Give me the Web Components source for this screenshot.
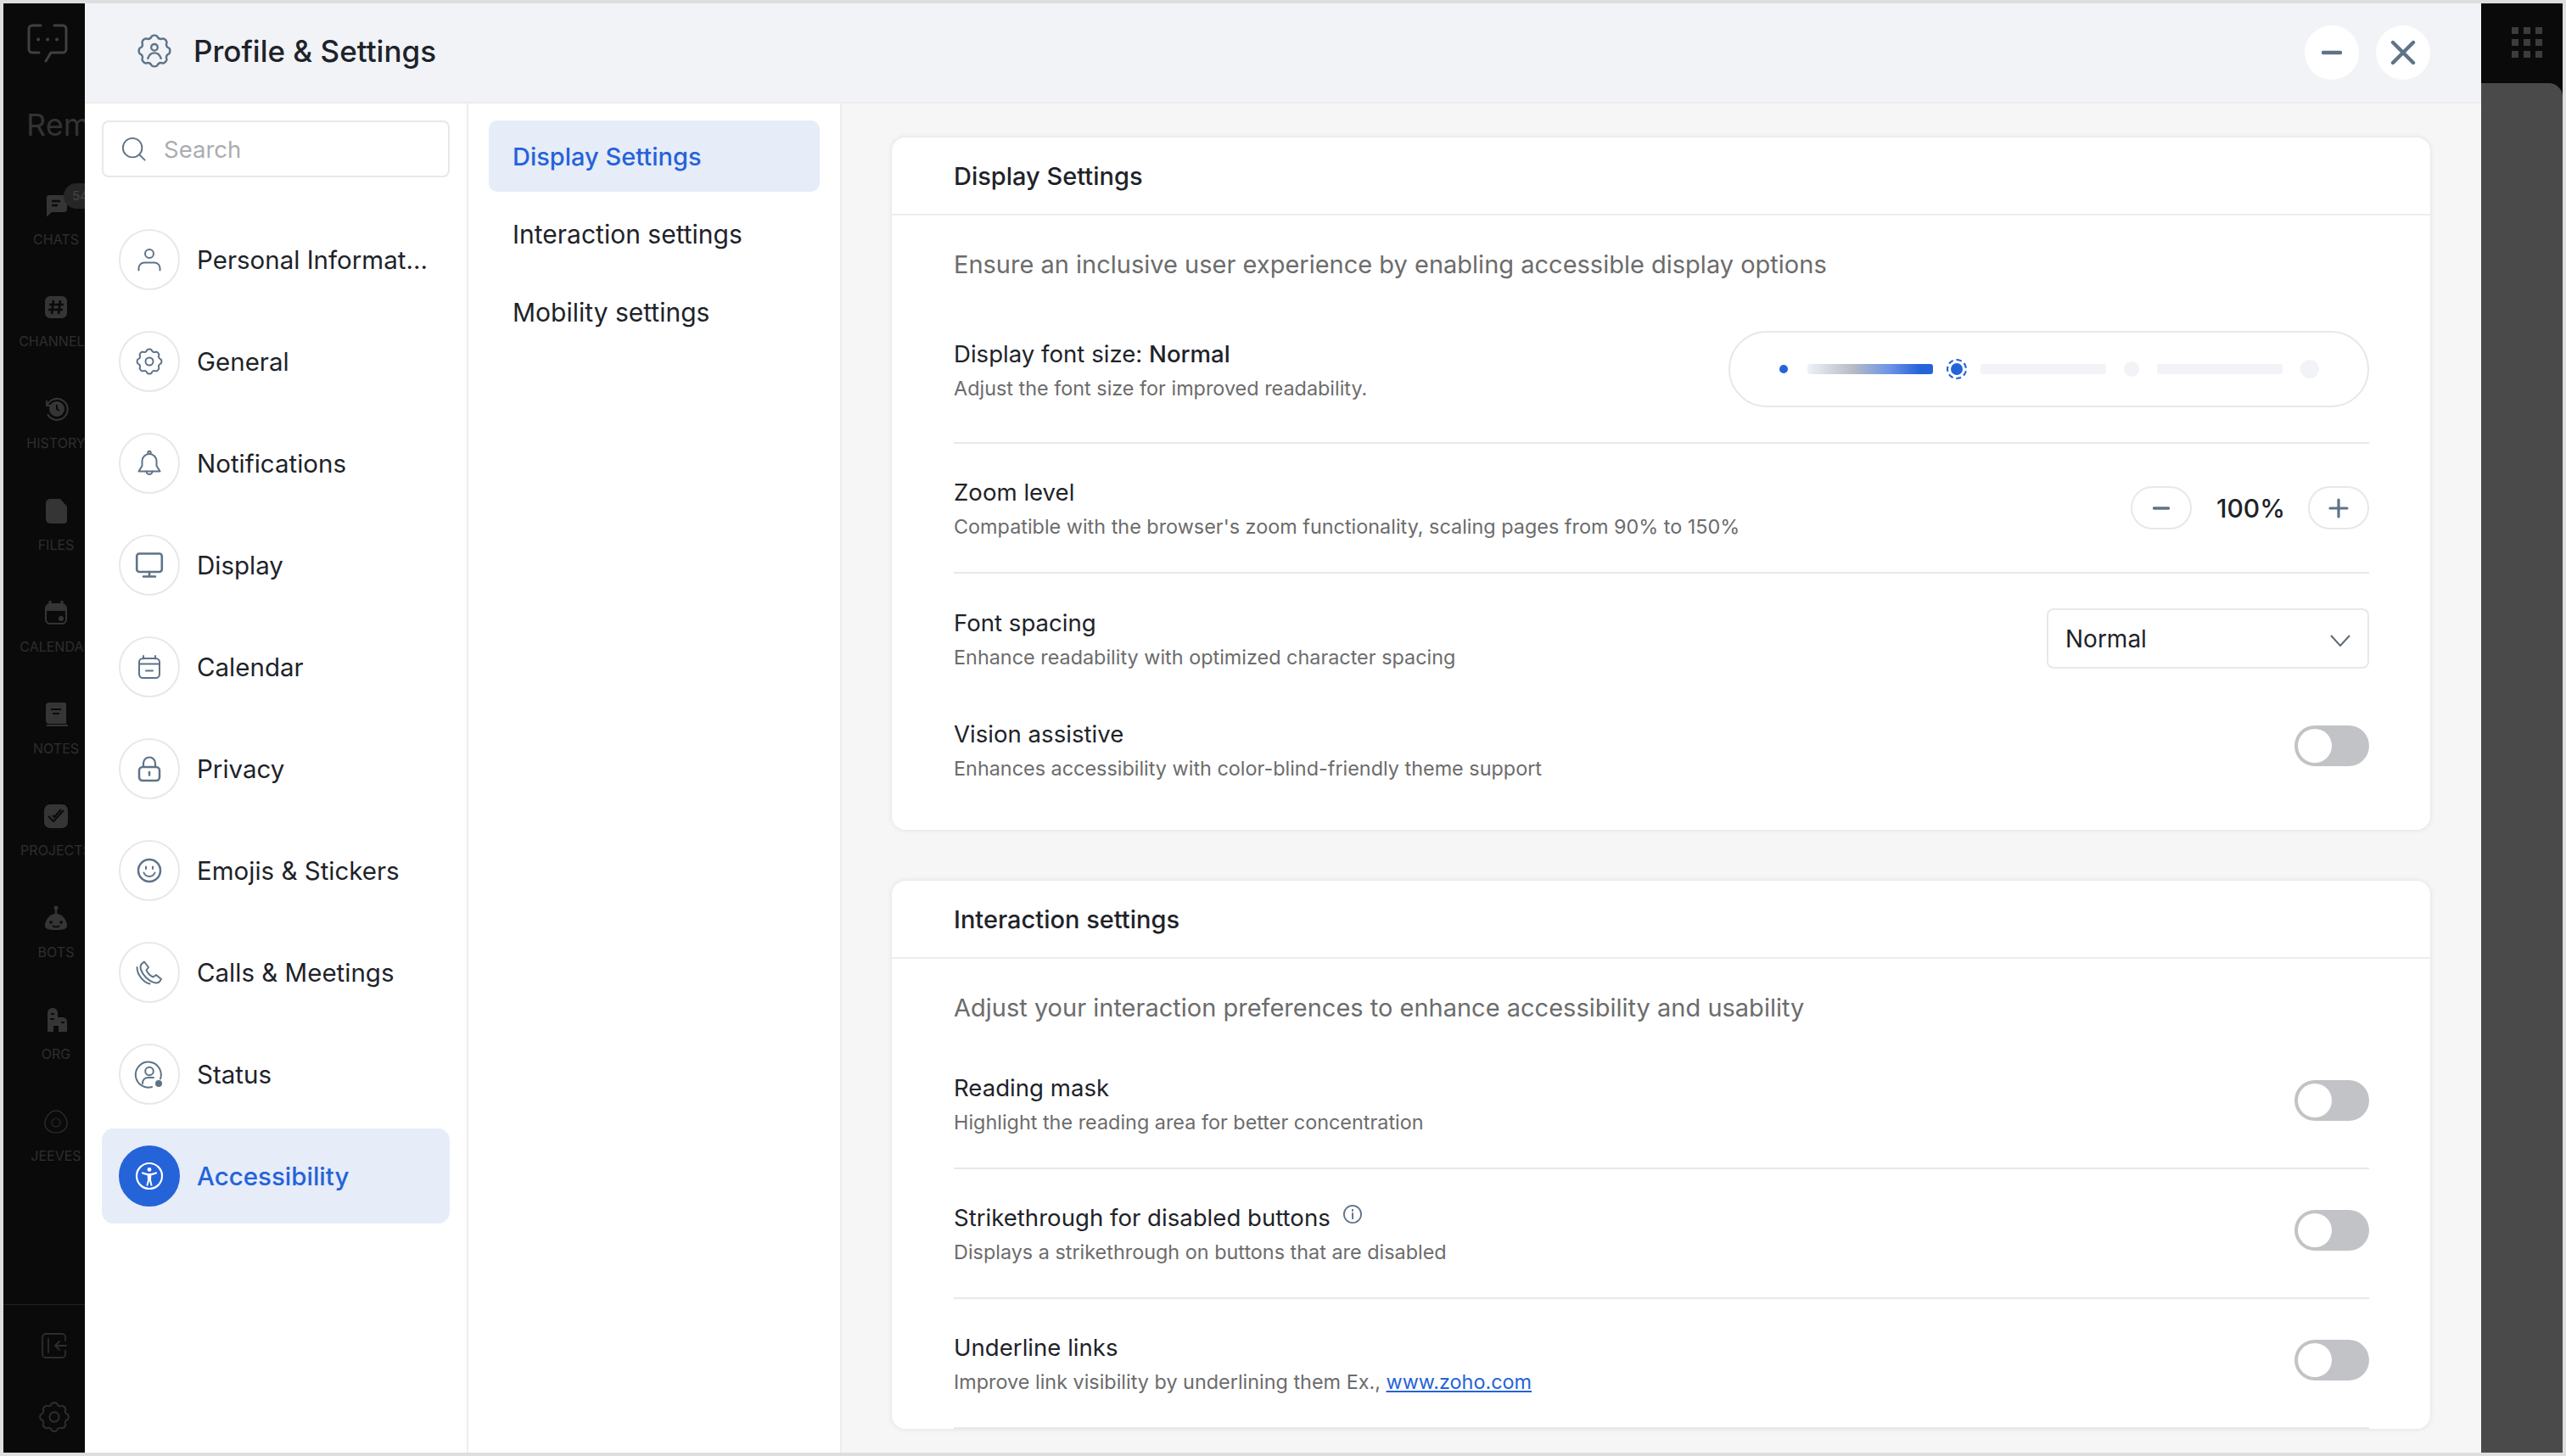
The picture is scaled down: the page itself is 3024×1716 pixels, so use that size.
<!DOCTYPE html>
<html>
<head>
<meta charset="utf-8">
<title>Profile &amp; Settings</title>
<style>
    html, body { margin: 0; height: 100%; overflow: hidden; background: #dedede; }
    body { font-family: Inter, "Liberation Sans", sans-serif; color: #1e2329; }
</style>
</head>
<body>
<app-shell>
    <side-rail slot="rail"></side-rail>
    <settings-modal slot="modal">
        <modal-header slot="header"></modal-header>
        <search-box slot="nav"></search-box>
        <nav-item slot="nav" icon="person">Personal Informat...</nav-item>
        <nav-item slot="nav" icon="gear">General</nav-item>
        <nav-item slot="nav" icon="bell">Notifications</nav-item>
        <nav-item slot="nav" icon="monitor">Display</nav-item>
        <nav-item slot="nav" icon="calendar">Calendar</nav-item>
        <nav-item slot="nav" icon="lock">Privacy</nav-item>
        <nav-item slot="nav" icon="smile">Emojis &amp; Stickers</nav-item>
        <nav-item slot="nav" icon="phone">Calls &amp; Meetings</nav-item>
        <nav-item slot="nav" icon="status">Status</nav-item>
        <nav-item slot="nav" icon="access" active>Accessibility</nav-item>

        <sub-item slot="sub" active>Display Settings</sub-item>
        <sub-item slot="sub">Interaction settings</sub-item>
        <sub-item slot="sub">Mobility settings</sub-item>

        <settings-card slot="content" heading="Display Settings" description="Ensure an inclusive user experience by enabling accessible display options" style="height:816px">
            <setting-row style="--row-h:174px">
                <span slot="title">Display font size: <b style="font-weight:500">Normal</b></span>
                <span slot="sub">Adjust the font size for improved readability.</span>
                <font-slider slot="control"></font-slider>
            </setting-row>
            <setting-row>
                <span slot="title">Zoom level</span>
                <span slot="sub">Compatible with the browser's zoom functionality, scaling pages from 90% to 150%</span>
                <zoom-stepper slot="control"></zoom-stepper>
            </setting-row>
            <setting-row plain>
                <span slot="title">Font spacing</span>
                <span slot="sub">Enhance readability with optimized character spacing</span>
                <select-box slot="control">Normal</select-box>
            </setting-row>
            <setting-row plain style="--row-h:108px">
                <span slot="title">Vision assistive</span>
                <span slot="sub">Enhances accessibility with color-blind-friendly theme support</span>
                <toggle-switch slot="control"></toggle-switch>
            </setting-row>
        </settings-card>

        <settings-card slot="content" heading="Interaction settings" description="Adjust your interaction preferences to enhance accessibility and usability">
            <setting-row>
                <span slot="title">Reading mask</span>
                <span slot="sub">Highlight the reading area for better concentration</span>
                <toggle-switch slot="control"></toggle-switch>
            </setting-row>
            <setting-row>
                <span slot="title">Strikethrough for disabled buttons <app-icon name="info" size="24" style="margin-left:6px;vertical-align:2px"></app-icon></span>
                <span slot="sub">Displays a strikethrough on buttons that are disabled</span>
                <toggle-switch slot="control"></toggle-switch>
            </setting-row>
            <setting-row>
                <span slot="title">Underline links</span>
                <span slot="sub">Improve link visibility by underlining them Ex., <a href="#" style="color:#2563d9">www.zoho.com</a></span>
                <toggle-switch slot="control"></toggle-switch>
            </setting-row>
        </settings-card>
    </settings-modal>
    <apps-strip slot="strip"></apps-strip>
</app-shell>

<script>
// scalloped cog used by the general, header and rail icons
function gearPath(cx, cy, inner, outer, teeth) {
    const step = Math.PI * 2 / teeth;
    const pt = (r, a) => `${(cx + r * Math.cos(a)).toFixed(2)} ${(cy + r * Math.sin(a)).toFixed(2)}`;
    let d = `M${pt(outer, -step * 0.22)}`;
    for (let i = 0; i < teeth; i++) {
        const a = i * step;
        d += ` Q${pt(outer + 1.2, a)} ${pt(outer, a + step * 0.22)}`;
        d += ` Q${pt(inner - 0.6, a + step * 0.5)} ${pt(outer, a + step * 0.78)}`;
    }
    return d + 'Z';
}

const ICONS = {
    person: '<circle cx="16" cy="9" r="5"/><path d="M3.5 28.5V26a6.5 6.5 0 0 1 6.5-6.5h12a6.5 6.5 0 0 1 6.5 6.5v2.5"/>',
    gear: `<path d="${gearPath(16, 16, 11, 14, 8)}"/><circle cx="16" cy="16" r="4.5"/>`,
    bell: '<circle cx="16" cy="3.4" r="1.7"/><path d="M16 5a8.5 8.5 0 0 0-8.5 8.5V19l-4 6.5h25l-4-6.5v-5.5A8.5 8.5 0 0 0 16 5z"/><path d="M12.5 25.5a3.5 3.5 0 0 0 7 0"/>',
    monitor: '<rect x="1.2" y="2.5" width="29.6" height="21.5" rx="3" stroke-width="2.6"/><path d="M16 24v5M9 29.5h14" stroke-width="2.6"/>',
    calendar: '<rect x="4" y="6" width="24" height="23" rx="4.5"/><path d="M4 12.5h24M9 3v3.5M23 3v3.5M12 20.5h8"/>',
    lock: '<rect x="4" y="14" width="24" height="16" rx="4" stroke-width="2.5"/><path d="M9 14V9.5a7 7 0 0 1 14 0V14" stroke-width="2.2"/><path d="M16 20v3.5" stroke-width="2.5"/>',
    smile: '<circle cx="16" cy="16" r="13" stroke-width="2.5"/><path d="M12 11.5v2.5M20 11.5v2.5M9.5 18.5a7 7 0 0 0 13 0"/>',
    phone: '<path d="M10 3.5 7 6c-3 3-1 10 5 16s13 8 16 5l2-3-6-5-3.5 2.5c-3-1-7-5-8-8l2.5-3.5z"/><path d="M1.5 10c0 9 8 18 15 19.5"/>',
    status: '<path d="M29 21.5A15 15 0 1 0 19 31"/><circle cx="16" cy="12.5" r="4.8"/><path d="M8 27c0-4.5 3-7 6.5-7H21"/><circle cx="27" cy="27" r="4" fill="currentColor" stroke="none"/>',
    access: '<circle cx="16" cy="16" r="15" stroke-width="2.2"/><circle cx="16" cy="8.5" r="2.4" fill="currentColor" stroke="none"/><path d="M8 12.5l5.5 1.6h5l5.5-1.6" stroke-width="2.2"/><path d="M13.6 14h4.8l-.4 6.5 1.6 7h-2L16 21.5l-1.6 6h-2l1.6-7z" fill="currentColor" stroke="none"/>',
    search: '<circle cx="14" cy="14" r="12"/><path d="M23 23l6.5 6.5"/>',
    info: '<circle cx="16" cy="16" r="13.5" stroke-width="2.4"/><path d="M16 14.5v8.5M16 9v1.6" stroke-width="2.6"/>',
    profile: `<path d="${gearPath(16, 16, 12, 15, 8)}"/><circle cx="16" cy="12.5" r="3.2"/><path d="M9.5 23.5c1.2-4 4-5.5 6.5-5.5s5.3 1.500 6.500 5.500"/>`
};

customElements.define('app-icon', class extends HTMLElement {
    connectedCallback() {
        const size = this.getAttribute('size') || 32;
        const root = this.shadowRoot || this.attachShadow({mode: 'open'});
        root.innerHTML = `<style>
            :host { display: inline-flex; color: var(--icon-color, #5f7388); }
            svg { display: block; overflow: visible; }
        </style>
        <svg width="${size}" height="${size}" viewBox="0 0 32 32" fill="none" stroke="currentColor" stroke-width="2" stroke-linecap="round" stroke-linejoin="round">${ICONS[this.getAttribute('name')]}</svg>`;
    }
});

customElements.define('app-shell', class extends HTMLElement {
    constructor() {
        super();
        const shadowRoot = this.attachShadow({mode: 'open'});
        shadowRoot.innerHTML = `<style>
            :host { display: flex; height: 1708px; margin: 4px; }
        </style>
        <slot name="rail"></slot><slot name="modal"></slot><slot name="strip"></slot>`;
    }
});

const RAIL_ITEMS = [
    ['CHATS', '<path d="M7 4h18a4 4 0 0 1 4 4v12a4 4 0 0 1-4 4H11l-6 5.500V8a3 3 0 0 1 2-4z"/><path d="M11 11h10M11 16h7" stroke="#0a0a0a" stroke-width="2.4" fill="none"/>'],
    ['CHANNELS', '<rect x="3" y="3" width="26" height="26" rx="6"/><path d="M13 8l-2 16M21 8l-2 16M8 13h17M7 19h17" stroke="#0a0a0a" stroke-width="2.600" fill="none"/>'],
    ['HISTORY', '<path d="M5 6v6h6M5.500 12A12.500 12.500 0 1 1 6 22" fill="none" stroke="#353535" stroke-width="2"/><circle cx="17" cy="16" r="9"/><path d="M17 11v5l3 2" stroke="#0a0a0a" stroke-width="2" fill="none"/>'],
    ['FILES', '<path d="M9 2h12l8 9v16a4 4 0 0 1-4 4H9a5 5 0 0 1-5-5V7a5 5 0 0 1 5-5z"/>'],
    ['CALENDAR', '<path d="M9 2v4M23 2v4" stroke="#353535" stroke-width="3"/><rect x="3" y="5" width="26" height="25" rx="6"/><path d="M5 14v10a4 4 0 0 0 4 4h14a4 4 0 0 0 4-4V14z" fill="#0a0a0a"/><circle cx="22" cy="23" r="3"/>'],
    ['NOTES', '<path d="M8 2h18a2 2 0 0 1 2 2v23H8a4 4 0 0 1-4-4V6a4 4 0 0 1 4-4z"/><path d="M10 10h12M12 15h8" stroke="#0a0a0a" stroke-width="2" fill="none"/><path d="M5 29h25" stroke="#353535" stroke-width="2"/>'],
    ['PROJECTS', '<rect x="2" y="2" width="28" height="28" rx="7"/><path d="M7 16l6 6 12-13M12 15l2 2 8-9" stroke="#0a0a0a" stroke-width="2" fill="none"/>'],
    ['BOTS', '<path d="M16 2v10" stroke="#353535" stroke-width="2.500"/><circle cx="16" cy="4" r="2.500"/><path d="M16 11c8 0 13 8 13 14 0 4-4 5-13 5S3 29 3 25c0-6 5-14 13-14z"/><path d="M10 21h.1M22 21h.1" stroke="#0a0a0a" stroke-width="3.500" stroke-linecap="round"/><path d="M12 25c2 2 6 2 8 0" stroke="#0a0a0a" stroke-width="2" fill="none"/>'],
    ['ORG', '<path d="M6 30V8c0-4 3-6 6-6s6 2 6 6v5h6a5 5 0 0 1 5 5v12H19v-7h-6v7z"/><path d="M10 9h4M9 15h5M22 19h4" stroke="#0a0a0a" stroke-width="2" fill="none"/>'],
    ['JEEVES', '<path d="M16 3c7 0 13 8 13 15s-6 11-13 11S3 25 3 18 9 3 16 3z" fill="none" stroke="#2a2a2a" stroke-width="1.500"/><circle cx="16" cy="17" r="5" fill="none" stroke="#2a2a2a" stroke-width="1.200"/>']
];

customElements.define('side-rail', class extends HTMLElement {
    constructor() {
        super();
        const items = RAIL_ITEMS.map(([label, icon]) => `
            <div class="item${label === 'CHATS' ? ' chats' : ''}">
                <svg width="32" height="32" viewBox="0 0 32 32" fill="#353535">${icon}</svg>
                <span>${label}</span>
                ${label === 'CHATS' ? '<em>54</em>' : ''}
            </div>`).join('');
        const shadowRoot = this.attachShadow({mode: 'open'});
        shadowRoot.innerHTML = `<style>
            :host { display: flex; flex-direction: column; width: 96px; height: 100%; background: #0a0a0a; overflow: hidden; flex: none; box-sizing: border-box; padding-top: 24px; }
            .logo { display: block; margin-left: 28px; flex: none; }
            .name { margin: 53px 0 0 27px; font-size: 36px; line-height: 40px; color: #333; white-space: nowrap; flex: none; }
            .items { margin-top: 59px; flex: none; }
            .item { position: relative; display: flex; flex-direction: column; align-items: center; width: 124px; height: 120px; gap: 14px; }
            .item span { font-size: 16px; line-height: 20px; color: #2e2e2e; }
            em { position: absolute; left: 71px; top: -10px; width: 60px; height: 30px; border-radius: 15px; background: #262626; color: #454545; font: normal 15px/30px Inter, sans-serif; padding-left: 10px; box-sizing: border-box; }
            .bottom { margin-top: auto; border-top: 1px solid #222; height: 175px; box-sizing: border-box; flex: none; width: 120px; display: flex; flex-direction: column; align-items: center; padding-top: 32px; gap: 50px; color: #2d2d2d; }
        </style>
        <svg class="logo" width="48" height="46" viewBox="0 0 48 46" fill="none" stroke="#404040" stroke-width="3" stroke-linecap="round" stroke-linejoin="round">
            <path d="M16 2H6a4 4 0 0 0-4 4v24a4 4 0 0 0 4 4h8M32 2h10a4 4 0 0 1 4 4v24a4 4 0 0 1-4 4H28l-6 10"/>
            <path d="M13 18.500h.1M24 18.500h.1M35 18.500h.1" stroke-width="4"/>
        </svg>
        <div class="name">Rem</div>
        <div class="items">${items}</div>
        <div class="bottom">
            <svg width="32" height="32" viewBox="0 0 32 32" fill="none" stroke="currentColor" stroke-width="1.800" stroke-linecap="round" stroke-linejoin="round"><path d="M29 10V6a4 4 0 0 0-4-4H6a4 4 0 0 0-4 4v20a4 4 0 0 0 4 4h19a4 4 0 0 0 4-4v-4M9 8v16M30 16H17M22 11l-5 5 5 5"/></svg>
            <svg width="36" height="36" viewBox="0 0 32 32" fill="none" stroke="currentColor" stroke-width="1.800" stroke-linejoin="round"><path d="${gearPath(16, 16, 11.500, 14.500, 8)}"/><circle cx="16" cy="16" r="5"/></svg>
        </div>`;
    }
});

customElements.define('apps-strip', class extends HTMLElement {
    constructor() {
        super();
        const shadowRoot = this.attachShadow({mode: 'open'});
        shadowRoot.innerHTML = `<style>
            :host { display: flex; flex-direction: column; width: 96px; flex: none; background: #0a0a0a; }
            .grid { display: grid; grid-template-columns: repeat(3, 8px); grid-auto-rows: 8px; gap: 6px; padding: 28px 0 0 36px; height: 94px; box-sizing: border-box; align-content: start; }
            .grid i { background: #3c3c3c; }
            .panel { flex: 1; background: #4a4a4a; border-top-right-radius: 16px; }
        </style>
        <div class="grid">${'<i></i>'.repeat(9)}</div>
        <div class="panel"></div>`;
    }
});

customElements.define('settings-modal', class extends HTMLElement {
    constructor() {
        super();
        const shadowRoot = this.attachShadow({mode: 'open'});
        shadowRoot.innerHTML = `<style>
            :host { display: flex; flex-direction: column; width: 2824px; flex: none; background: #fff; overflow: hidden; }
            .body { flex: 1; min-height: 0; display: grid; grid-template-columns: 452px 440px 1fr; }
            .nav { border-right: 2px solid #ededed; padding: 20px 20px 0 20px; display: flex; flex-direction: column; gap: 8px; }
            .sub { border-right: 2px solid #ededed; padding: 20px 24px 0 24px; display: flex; flex-direction: column; gap: 8px; }
            .content { background: #f6f6f6; padding: 40px 60px 0 59px; display: flex; flex-direction: column; gap: 60px; overflow: hidden; }
        </style>
        <slot name="header"></slot>
        <div class="body">
            <div class="nav"><slot name="nav"></slot></div>
            <div class="sub"><slot name="sub"></slot></div>
            <div class="content"><slot name="content"></slot></div>
        </div>`;
    }
});

customElements.define('modal-header', class extends HTMLElement {
    constructor() {
        super();
        const shadowRoot = this.attachShadow({mode: 'open'});
        shadowRoot.innerHTML = `<style>
            :host { display: flex; align-items: center; height: 118px; box-sizing: border-box; flex: none; background: #f1f3f7; border-bottom: 2px solid #ececec; padding: 0 60px 0 63px; }
            h1 { margin: 0 0 4px 27px; font-size: 35px; font-weight: 500; flex: 1; color: #1e2329; }
            app-icon { margin-bottom: 4px; }
            button { width: 64px; height: 64px; border: 0; border-radius: 50%; background: #fff; margin-left: 20px; padding: 0; display: flex; align-items: center; justify-content: center; }
        </style>
        <app-icon name="profile" size="38"></app-icon>
        <h1>Profile &amp; Settings</h1>
        <button><svg width="24" height="6" viewBox="0 0 24 6"><path d="M2 3h20" stroke="#5f7388" stroke-width="4.400" stroke-linecap="round"/></svg></button>
        <button><svg width="30" height="30" viewBox="0 0 30 30"><path d="M3 3l24 24M27 3L3 27" stroke="#5f7388" stroke-width="4.400" stroke-linecap="round"/></svg></button>`;
    }
});

customElements.define('search-box', class extends HTMLElement {
    constructor() {
        super();
        const shadowRoot = this.attachShadow({mode: 'open'});
        shadowRoot.innerHTML = `<style>
            :host { display: flex; align-items: center; height: 67px; box-sizing: border-box; border: 2px solid #e8e8e8; border-radius: 8px; padding-left: 21px; margin: 0 0 33px 0; gap: 20px; }
            span { font-size: 27.5px; color: #a9adb3; }
        </style>
        <app-icon name="search" size="30"></app-icon>
        <span>Search</span>`;
    }
});

customElements.define('nav-item', class extends HTMLElement {
    constructor() {
        super();
        const shadowRoot = this.attachShadow({mode: 'open'});
        shadowRoot.innerHTML = `<style>
            :host { display: flex; align-items: center; height: 112px; flex: none; box-sizing: border-box; padding-left: 20px; gap: 20px; border-radius: 14px; font-size: 29.5px; color: #1e2329; white-space: nowrap; }
            :host([active]) { background: #e6ecf8; color: #2563d9; font-weight: 500; }
            .badge { width: 72px; height: 72px; box-sizing: border-box; border: 2px solid #e8e8e8; border-radius: 50%; display: flex; align-items: center; justify-content: center; flex: none; }
            :host([active]) .badge { background: #2563d9; border-color: #2563d9; --icon-color: #fff; }
        </style>
        <div class="badge"><app-icon name="${this.getAttribute('icon')}" size="32"></app-icon></div>
        <slot></slot>`;
    }
});

customElements.define('sub-item', class extends HTMLElement {
    constructor() {
        super();
        const shadowRoot = this.attachShadow({mode: 'open'});
        shadowRoot.innerHTML = `<style>
            :host { display: flex; align-items: center; height: 84px; flex: none; padding-left: 28px; border-radius: 10px; font-size: 30px; color: #1e2329; }
            :host([active]) { background: #e6ecf8; color: #2563d9; font-weight: 500; font-size: 29px; }
        </style>
        <slot></slot>`;
    }
});

customElements.define('settings-card', class extends HTMLElement {
    constructor() {
        super();
        const shadowRoot = this.attachShadow({mode: 'open'});
        shadowRoot.innerHTML = `<style>
            :host { display: block; flex: none; box-sizing: border-box; background: #fff; border-radius: 16px; box-shadow: 0 0 6px rgba(0, 0, 0, .1); }
            header { height: 92px; box-sizing: border-box; display: flex; align-items: center; padding: 0 72px 0 73px; border-bottom: 2px solid #ededed; font-size: 29px; font-weight: 500; color: #1e2329; }
            .body { padding: 0 72px 0 73px; }
            p { margin: 0; height: 95px; box-sizing: border-box; padding-top: 38px; font-size: 29px; line-height: 40px; color: #6c6c6c; }
        </style>
        <header>${this.getAttribute('heading')}</header>
        <div class="body">
            <p>${this.getAttribute('description')}</p>
            <slot></slot>
        </div>`;
    }
});

customElements.define('setting-row', class extends HTMLElement {
    constructor() {
        super();
        const shadowRoot = this.attachShadow({mode: 'open'});
        shadowRoot.innerHTML = `<style>
            :host { display: flex; align-items: center; justify-content: space-between; height: var(--row-h, 153px); box-sizing: border-box; border-bottom: 2px solid #e8e8e8; }
            :host([plain]) { border-bottom: 0; }
            .title { font-size: 27.6px; line-height: 40px; color: #1e2329; }
            .sub { font-size: 23.4px; line-height: 32px; margin-top: 5px; color: #6c6c6c; }
        </style>
        <div>
            <div class="title"><slot name="title"></slot></div>
            <div class="sub"><slot name="sub"></slot></div>
        </div>
        <slot name="control"></slot>`;
    }
});

customElements.define('toggle-switch', class extends HTMLElement {
    constructor() {
        super();
        const shadowRoot = this.attachShadow({mode: 'open'});
        shadowRoot.innerHTML = `<style>
            :host { display: flex; align-items: center; width: 88px; height: 48px; box-sizing: border-box; padding: 4px; border-radius: 24px; background: #c2c3c7; margin-bottom: 8px; }
            i { width: 40px; height: 40px; border-radius: 50%; background: #fff; }
        </style>
        <i></i>`;
    }
});

customElements.define('font-slider', class extends HTMLElement {
    constructor() {
        super();
        const shadowRoot = this.attachShadow({mode: 'open'});
        shadowRoot.innerHTML = `<style>
            :host { display: flex; align-items: center; width: 755px; height: 90px; box-sizing: border-box; border: 2px solid #e8e8e8; border-radius: 45px; padding-left: 35px; }
            .stop { width: 56px; display: flex; justify-content: center; align-items: center; flex: none; }
            .stop.wide { width: 60px; }
            .stop.last { width: 64px; }
            .stop i { display: block; border-radius: 50%; background: #f1f3f7; }
            .bar { width: 148px; height: 12px; border-radius: 3px; background: #f1f3f7; flex: none; }
            .bar.on { background: linear-gradient(90deg, #eef1f8, #b9bdc4 35%, #6f94e6 65%, #2563d9 90%); }
            .on-dot { width: 10px; height: 10px; background: #2563d9 !important; }
            .cur { width: 14px; height: 14px; background: #2563d9 !important; }
            .ring { width: 20px; height: 20px; border: 2px dashed #2563d9; border-radius: 50%; display: flex; align-items: center; justify-content: center; }
        </style>
        <div class="stop"><i class="on-dot"></i></div>
        <div class="bar on"></div>
        <div class="stop"><div class="ring"><i class="cur" style="display:block;border-radius:50%"></i></div></div>
        <div class="bar"></div>
        <div class="stop wide"><i style="width:18px;height:18px"></i></div>
        <div class="bar"></div>
        <div class="stop last"><i style="width:22px;height:22px"></i></div>`;
    }
});

customElements.define('zoom-stepper', class extends HTMLElement {
    constructor() {
        super();
        const shadowRoot = this.attachShadow({mode: 'open'});
        shadowRoot.innerHTML = `<style>
            :host { display: flex; align-items: center; gap: 29px; }
            button { width: 72px; height: 51px; box-sizing: border-box; background: #fff; border: 2px solid #e8e8e8; border-radius: 26px; padding: 0; display: flex; align-items: center; justify-content: center; }
            span { font-size: 30px; font-weight: 500; width: 79px; text-align: center; color: #1e2329; }
        </style>
        <button><svg width="20" height="4" viewBox="0 0 20 4"><path d="M1.500 2h17" stroke="#5f7388" stroke-width="3.500" stroke-linecap="round"/></svg></button>
        <span>100%</span>
        <button><svg width="24" height="24" viewBox="0 0 24 24"><path d="M2 12h20M12 2v20" stroke="#5f7388" stroke-width="3.200" stroke-linecap="round"/></svg></button>`;
    }
});

customElements.define('select-box', class extends HTMLElement {
    constructor() {
        super();
        const shadowRoot = this.attachShadow({mode: 'open'});
        shadowRoot.innerHTML = `<style>
            :host { display: flex; align-items: center; justify-content: space-between; width: 380px; height: 71px; box-sizing: border-box; border: 2px solid #e8e8e8; border-radius: 8px; padding: 0 20px; font-size: 28px; color: #1e2329; }
        </style>
        <slot></slot>
        <svg width="24" height="14" viewBox="0 0 24 14" style="margin-top:4px"><path d="M1 1l11 12L23 1" fill="none" stroke="#5f6b76" stroke-width="2"/></svg>`;
    }
});
</script>
</body>
</html>
